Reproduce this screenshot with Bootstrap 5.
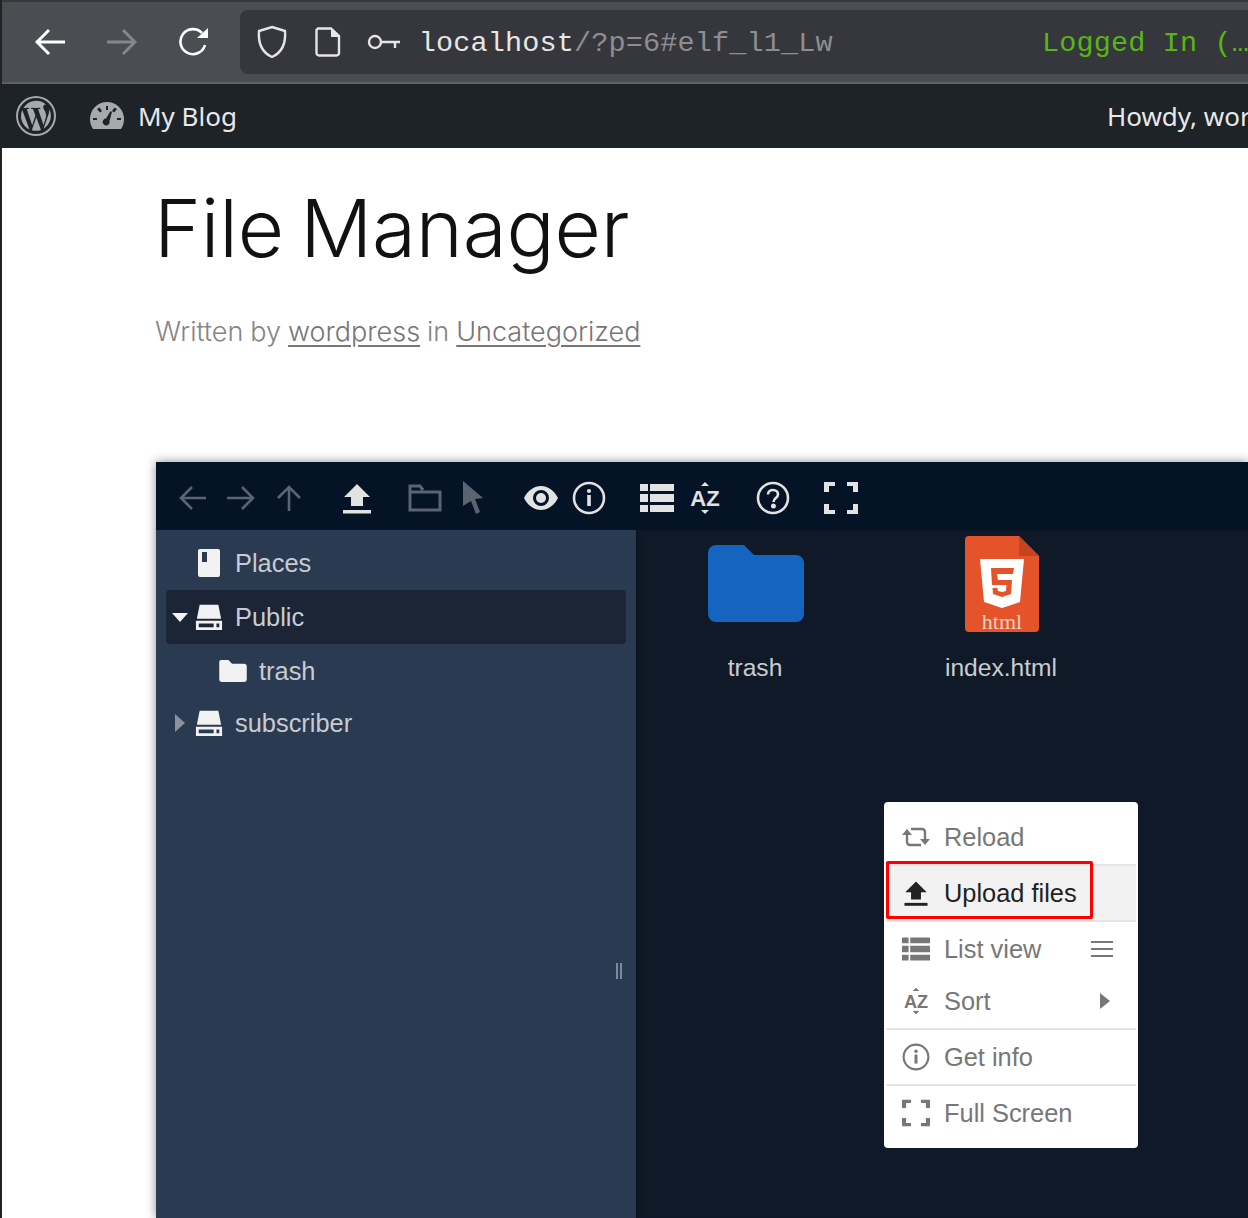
<!DOCTYPE html>
<html lang="en">
<head>
  <meta charset="UTF-8" />
  <title>File Manager</title>
  <link href="https://cdn.jsdelivr.net/npm/bootstrap@5.3.0/dist/css/bootstrap.min.css" rel="stylesheet">
  <style>
    html, body { height: 1218px; overflow: hidden; }
    body { background: #fff; border-left: 2px solid #222; width: 1248px; }

    /* browser chrome */
    .chrome-bar { height: 84px; margin-left: -2px; background: #4a4d52; border-top: 2px solid #36383c; border-bottom: 2px solid #5d6064; }
    .chrome-nav { width: 240px; padding-left: 14px; }
    .chrome-btn { width: 72px; }
    .url-box { height: 64px; margin-top: 8px; background: #36373c; border-radius: 8px 0 0 8px; font-family: "Liberation Mono", monospace; font-size: 28.5px; letter-spacing: .15px; white-space: nowrap; overflow: hidden; }
    .url-host { color: #e6e6e6; padding-top: 5px; }
    .url-rest { color: #8d8e92; padding-top: 5px; }
    .url-icons { width: 179px; padding-left: 4px; flex-shrink: 0; }
    .url-slot { width: 56px; }
    .url-status { color: #56b614; margin-left: 209px; padding-top: 5px; }

    /* wp admin bar */
    .wp-bar { height: 64px; margin-left: -2px; padding: 0 0 0 16px; background: #1d2327; color: #e8e9ea; font-family: "Noto Sans", sans-serif; font-size: 26px; white-space: nowrap; overflow: hidden; flex-wrap: nowrap; justify-content: flex-start; }
    .wp-blog { margin-left: 34px; gap: 14px; flex-shrink: 0; }
    .wp-user { margin-left: 870px; flex-shrink: 0; }

    /* post header */
    .post-head { padding-left: 152px; height: 314px; }
    .post-title { margin: 0; padding-top: 34px; font-family: Inter, sans-serif; font-weight: 300; font-size: 80px; line-height: 92px; letter-spacing: -0.2px; word-spacing: -6px; color: #111; }
    .post-meta { margin: 40px 0 0 1px; font-family: Inter, sans-serif; font-weight: 300; font-size: 27px; line-height: 36px; letter-spacing: 0; word-spacing: -.6px; color: #858585; }
    .post-meta a { color: #767676; text-underline-offset: 4px; }

    /* file manager */
    .fm-box { margin-left: 154px; height: 756px; box-shadow: 0 0 10px rgba(0,0,0,.45); font-family: "Liberation Sans", sans-serif; font-size: 25.4px; }
    .fm-tools { height: 68px; padding: 4px 0 0 13px; gap: 20px; background: #051326; color: #e2e2e2; }
    .fm-tool { width: 48px; height: 64px; }
    .fm-tool.off { color: #5b6472; }
    .fm-body { height: 688px; }
    .fm-side { width: 480px; background: #2a3a50; color: #c8ccd2; padding: 6px 10px 0; }
    .fm-row { height: 54px; border-radius: 4px; }
    .fm-row.active { background: #1c2535; }
    .fm-row.last { height: 50px; }
    .fm-arrow { width: 27px; }
    .fm-ico { width: 32px; margin-right: 10px; color: #f2f2f2; }
    .fm-sub { padding-left: 53px; }
    .fm-sub .fm-ico { width: 28px; margin-right: 12px; }
    .fm-grip { left: 460px; top: 433px; width: 6px; height: 16px; border-left: 2px solid #7f8a99; border-right: 2px solid #7f8a99; }
    .fm-main { background: #101927; color: #c8ccd2; padding: 6px 0 0; gap: 8px; box-shadow: inset 5px 0 5px -4px #0a101a; }
    .fm-cell { width: 238px; }
    .fm-thumb { height: 96px; padding-left: 2px; }
    .fm-thumb svg { overflow: visible; }
    .fm-name { margin-top: 21px; line-height: 30px; font-size: 24.6px; }

    /* context menu */
    .ctx-menu { left: 728px; top: 340px; width: 254px; padding: 8px 2px; margin: 0; border: 0; border-radius: 4px; font-size: 25.4px; }
    .ctx-item { height: 54px; padding: 0 0 0 16px; color: #777; }
    .ctx-item.short { height: 52px; padding-bottom: 2px; }
    .ctx-item.hot { background: #f2f2f2; color: #222; }
    .ctx-item .ctx-ico { width: 28px; margin-right: 14px; }
    .ctx-sep { margin: 0; border-top: 2px solid #e5e5e5; opacity: 1; }
    .ctx-mark { left: 2px; top: 59px; width: 207px; height: 58px; border: 3px solid #f00; border-radius: 2px; }
    .ctx-right { margin-left: auto; margin-right: 23px; }
    .ctx-caret { margin-left: auto; margin-right: 26px; }
    svg { display: block; }
  </style>
</head>
<body>
  <!-- shared icons -->
  <svg width="0" height="0" class="position-absolute">
    <symbol id="i-upload" viewBox="0 0 34 34"><path fill="currentColor" d="M17 3 30 16H23V25H11V16H4Z"/><rect x="3" y="29" width="28" height="3.5" fill="currentColor"/></symbol>
    <symbol id="i-info" viewBox="0 0 34 34"><circle cx="17" cy="17" r="15" fill="none" stroke="currentColor" stroke-width="2.6"/><rect x="15.2" y="14" width="3.6" height="11" fill="currentColor"/><circle cx="17" cy="10" r="2.1" fill="currentColor"/></symbol>
    <symbol id="i-list" viewBox="0 0 34 34"><path fill="currentColor" d="M0 3H8V10H0ZM10 3H34V10H10ZM0 13H8V21H0ZM10 13H34V21H10ZM0 24H8V31H0ZM10 24H34V31H10Z"/></symbol>
    <symbol id="i-full" viewBox="0 0 34 34"><path fill="currentColor" d="M0 1H11V5H5V11H0ZM23 1H34V11H29V5H23ZM0 23H5V29H11V33H0ZM29 23H34V33H23V29H29Z"/></symbol>
    <symbol id="i-drive" viewBox="0 0 30 30"><path fill="currentColor" d="M5 2H25L28 17H2Z"/><path fill="currentColor" d="M1 19H29V29H1ZM4 22V26H20V22ZM23 22V26H26V22Z" fill-rule="evenodd"/></symbol>
    <symbol id="i-folder" viewBox="0 0 30 24"><path fill="currentColor" d="M2 0H10L14 4H27A3 3 0 0 1 30 7V21A3 3 0 0 1 27 24H3A3 3 0 0 1 0 21V2A2 2 0 0 1 2 0Z"/></symbol>
  </svg>

  <header class="chrome-bar d-flex">
    <div class="chrome-nav d-flex align-items-center">
      <div class="chrome-btn d-flex justify-content-center"><svg width="30" height="28" viewBox="0 0 30 28" fill="none" stroke="#fff" stroke-width="3"><path d="M1 14H30M14 2 2 14 14 26"/></svg></div>
      <div class="chrome-btn d-flex justify-content-center"><svg width="30" height="28" viewBox="0 0 30 28" fill="none" stroke="#85878a" stroke-width="3"><path d="M0 14H28M16 2 28 14 16 26"/></svg></div>
      <div class="chrome-btn d-flex justify-content-center"><svg width="30" height="30" viewBox="0 0 30 30" fill="none" stroke="#fff" stroke-width="2.6"><path d="M26 18A12.5 12.5 0 1 1 23 6"/><path d="M18 11H29V1Z" fill="#fff" stroke="none"/></svg></div>
    </div>
    <div class="url-box flex-grow-1 d-flex align-items-center">
      <div class="url-icons d-flex align-items-center">
        <div class="url-slot d-flex justify-content-center"><svg width="32" height="34" viewBox="0 0 32 34" fill="none" stroke="#e6e6e6" stroke-width="2.4"><path d="M16 2 29 6C30 18 27 27 16 32 5 27 2 18 3 6Z"/></svg></div>
        <div class="url-slot d-flex justify-content-center"><svg width="26" height="30" viewBox="0 0 26 30" fill="none" stroke="#e6e6e6" stroke-width="2.4"><path d="M3 1.500H16L24 9V26A2.500 2.500 0 0 1 21.500 28.500H4A2.500 2.500 0 0 1 1.500 26V3Z"/><path d="M16 1 25 10H16Z" fill="#e6e6e6" stroke="none"/></svg></div>
        <div class="url-slot d-flex justify-content-center"><svg width="34" height="18" viewBox="0 0 34 18" fill="none" stroke="#e6e6e6" stroke-width="2.4"><circle cx="8" cy="9" r="6"/><path d="M14 9H33M28 9V15"/></svg></div>
      </div>
      <span class="url-host">localhost</span><span class="url-rest">/?p=6#elf_l1_Lw</span>
      <span class="url-status">Logged In (…</span>
    </div>
  </header>

  <nav class="navbar wp-bar">
    <svg class="flex-shrink-0" width="40" height="40" viewBox="0 0 40 40" fill="#a7aaad"><path fill-rule="evenodd" d="M20 0a20 20 0 1 0 0 40 20 20 0 0 0 0-40Zm0 2a18 18 0 1 1 0 36 18 18 0 0 1 0-36Z"/><path d="M5 20c0 6 3.500 11 8.500 13.500L6.300 14A15 15 0 0 0 5 20Zm25-1c0-2-.7-3.300-1.300-4.300-.8-1.300-1.500-2.400-1.500-3.600 0-1.400 1-2.700 2.600-2.700h.2A15 15 0 0 0 7.400 12h1c1.600 0 4-.2 4-.2.800 0 .9 1.200.1 1.300 0 0-.8.100-1.700.1l5.400 16 3.200-9.700-2.300-6.300c-.8 0-1.500-.1-1.500-.1-.8-.1-.7-1.300.1-1.300 0 0 2.500.2 4 .2 1.600 0 4-.2 4-.2.800 0 .9 1.200.1 1.300 0 0-.8.100-1.700.1l5.400 15.900 1.500-4.900c.6-2 1-3.400 1-4.200ZM20.300 21.200l-4.500 13a15 15 0 0 0 9.200-.2l-.1-.2ZM33.100 12.700c.1.500.1 1 .1 1.500 0 1.500-.3 3.200-1.100 5.300l-4.600 13.200a15 15 0 0 0 5.600-20Z"/></svg>
    <div class="wp-blog d-flex align-items-center">
      <svg width="34" height="28" viewBox="0 0 34 28" fill="#a7aaad"><path fill-rule="evenodd" d="M17 0A17 17 0 0 0 0 17C0 21 1 24 3 27H31C33 24 34 21 34 17A17 17 0 0 0 17 0ZM16 4H18V8H16ZM7 7 9.500 5.500 12 9 10 10.500ZM24.500 5.500 27 7 24 10.500 22 9ZM3 16H7V18H3ZM27 16H31V18H27ZM20.500 9 22 10 19.500 19A3.500 3.500 0 1 1 16 16.500Z"/></svg>
      <span>My Blog</span>
    </div>
    <span class="wp-user">Howdy, wordpress</span>
  </nav>

  <section class="post-head">
    <h1 class="post-title">File Manager</h1>
    <p class="post-meta">Written by <a href="#">wordpress</a> in <a href="#">Uncategorized</a></p>
  </section>

  <section class="fm-box position-relative">
    <div class="fm-tools d-flex">
      <div class="d-flex">
        <div class="fm-tool off d-flex align-items-center justify-content-center"><svg width="28" height="26" viewBox="0 0 28 26" fill="none" stroke="currentColor" stroke-width="2.6"><path d="M2 13H27M13 2 2 13 13 24"/></svg></div>
        <div class="fm-tool off d-flex align-items-center justify-content-center"><svg width="28" height="26" viewBox="0 0 28 26" fill="none" stroke="currentColor" stroke-width="2.6"><path d="M0 13H25M15 2 26 13 15 24"/></svg></div>
        <div class="fm-tool off d-flex align-items-center justify-content-center"><svg width="26" height="26" viewBox="0 0 26 26" fill="none" stroke="currentColor" stroke-width="2.6"><path d="M13 26V2M2 13 13 2 24 13"/></svg></div>
      </div>
      <div class="d-flex">
        <div class="fm-tool d-flex align-items-center justify-content-center"><svg width="34" height="34"><use href="#i-upload"/></svg></div>
      </div>
      <div class="d-flex">
        <div class="fm-tool off d-flex align-items-center justify-content-center"><svg width="34" height="28" viewBox="0 0 34 28" fill="none" stroke="currentColor" stroke-width="3"><path d="M2 8H32V26H2ZM2 8V2H12L15 6"/></svg></div>
        <div class="fm-tool off d-flex align-items-center justify-content-center"><svg width="24" height="34" viewBox="0 0 24 34" fill="currentColor"><path d="M2 0 22 17 14 18 19 31 15 33 10 20 2 25Z"/></svg></div>
      </div>
      <div class="d-flex">
        <div class="fm-tool d-flex align-items-center justify-content-center"><svg width="34" height="24" viewBox="0 0 34 24"><path fill="currentColor" fill-rule="evenodd" d="M17 0C25 0 31 6 34 12 31 18 25 24 17 24 9 24 3 18 0 12 3 6 9 0 17 0ZM17 4A8 8 0 1 0 17 20 8 8 0 0 0 17 4Z"/><circle cx="17" cy="12" r="5" fill="currentColor"/></svg></div>
        <div class="fm-tool d-flex align-items-center justify-content-center"><svg width="34" height="34"><use href="#i-info"/></svg></div>
      </div>
      <div class="d-flex">
        <div class="fm-tool d-flex align-items-center justify-content-center"><svg width="34" height="34"><use href="#i-list"/></svg></div>
        <div class="fm-tool d-flex align-items-center justify-content-center"><svg width="34" height="34" viewBox="0 0 34 34"><path fill="currentColor" d="M17 1 21 5H13ZM17 33 21 29H13Z"/><text x="17" y="25" text-anchor="middle" font-family="Liberation Sans" font-weight="700" font-size="22" fill="currentColor">AZ</text></svg></div>
      </div>
      <div class="d-flex">
        <div class="fm-tool d-flex align-items-center justify-content-center"><svg width="34" height="34" viewBox="0 0 34 34" fill="none" stroke="currentColor" stroke-width="2.6"><circle cx="17" cy="17" r="15"/><path d="M12 13.500C12 10.500 14.500 9 17 9 20 9 22 11 22 13.500 22 17 17.500 17 17.500 21"/><circle cx="17.500" cy="25" r="1.200" fill="currentColor"/></svg></div>
      </div>
      <div class="d-flex">
        <div class="fm-tool d-flex align-items-center justify-content-center"><svg width="34" height="34"><use href="#i-full"/></svg></div>
      </div>
    </div>

    <div class="fm-body d-flex">
      <aside class="fm-side position-relative">
        <div class="fm-row d-flex align-items-center">
          <div class="fm-arrow"></div>
          <div class="fm-ico d-flex justify-content-center"><svg width="22" height="28" viewBox="0 0 22 28"><path fill="currentColor" fill-rule="evenodd" d="M2 0H20A2 2 0 0 1 22 2V26A2 2 0 0 1 20 28H2A2 2 0 0 1 0 26V2A2 2 0 0 1 2 0ZM4 3V13H9V3Z"/></svg></div>
          <span>Places</span>
        </div>
        <div class="fm-row active d-flex align-items-center">
          <div class="fm-arrow d-flex justify-content-center"><svg width="16" height="9" viewBox="0 0 18 10" preserveAspectRatio="none"><path fill="#f2f2f2" d="M0 0H18L9 10Z"/></svg></div>
          <div class="fm-ico d-flex justify-content-center"><svg width="28" height="28"><use href="#i-drive"/></svg></div>
          <span>Public</span>
        </div>
        <div class="fm-row fm-sub d-flex align-items-center">
          <div class="fm-ico d-flex justify-content-center"><svg width="28" height="22"><use href="#i-folder"/></svg></div>
          <span>trash</span>
        </div>
        <div class="fm-row last d-flex align-items-center">
          <div class="fm-arrow d-flex justify-content-center"><svg width="10" height="18" viewBox="0 0 10 18"><path fill="#8a929e" d="M0 0V18L10 9Z"/></svg></div>
          <div class="fm-ico d-flex justify-content-center"><svg width="28" height="28"><use href="#i-drive"/></svg></div>
          <span>subscriber</span>
        </div>
        <div class="fm-grip position-absolute"></div>
      </aside>

      <main class="fm-main flex-grow-1 d-flex align-items-start">
        <div class="fm-cell text-center">
          <div class="fm-thumb d-flex justify-content-center"><svg width="96" height="96" viewBox="0 0 96 96"><path fill="#1565c0" d="M8 9H36L46 19H88A8 8 0 0 1 96 27V78A8 8 0 0 1 88 86H8A8 8 0 0 1 0 78V17A8 8 0 0 1 8 9Z"/></svg></div>
          <div class="fm-name">trash</div>
        </div>
        <div class="fm-cell text-center">
          <div class="fm-thumb d-flex justify-content-center"><svg width="74" height="96" viewBox="0 0 74 96">
            <path fill="#e5532a" d="M4 0H54L74 20V92A4 4 0 0 1 70 96H4A4 4 0 0 1 0 92V4A4 4 0 0 1 4 0Z"/>
            <path fill="#c4441f" d="M54 0 74 20H54Z"/>
            <path fill="#fff" d="M15 23H59L55 66 37 72 19 66Z"/>
            <path fill="#e5532a" d="M26 32H49L48 38H32L33 44H47L46 58 37 61 28 58 27.500 52H32.500L33 55 37 56 41 55 41.500 49H27Z"/>
            <text x="37" y="93" text-anchor="middle" font-family="Liberation Serif" font-size="22" fill="#f6d2c6">html</text>
          </svg></div>
          <div class="fm-name">index.html</div>
        </div>
      </main>
    </div>

    <div class="dropdown-menu d-block ctx-menu position-absolute">
      <a class="dropdown-item ctx-item d-flex align-items-center" href="#">
        <div class="ctx-ico"><svg width="28" height="22" viewBox="0 0 28 22" fill="none" stroke="currentColor" stroke-width="2.4"><path d="M5 8V16A3 3 0 0 0 8 19H19M9 3H20A3 3 0 0 1 23 6V14"/><path d="M0 9 5 3 10 9ZM18 13 23 19 28 13Z" fill="currentColor" stroke="none"/></svg></div>Reload
      </a>
      <hr class="ctx-sep">
      <a class="dropdown-item ctx-item hot d-flex align-items-center" href="#">
        <div class="ctx-ico"><svg width="28" height="28"><use href="#i-upload"/></svg></div>Upload files
      </a>
      <hr class="ctx-sep">
      <a class="dropdown-item ctx-item d-flex align-items-center" href="#">
        <div class="ctx-ico"><svg width="28" height="28"><use href="#i-list"/></svg></div>List view
        <svg class="ctx-right" width="22" height="16" viewBox="0 0 24 16" preserveAspectRatio="none" fill="currentColor"><path d="M0 0H24V2H0ZM0 7H24V9H0ZM0 14H24V16H0Z"/></svg>
      </a>
      <a class="dropdown-item ctx-item short d-flex align-items-center" href="#">
        <div class="ctx-ico"><svg width="28" height="28" viewBox="0 0 34 34"><path fill="currentColor" d="M17 1 21 5H13ZM17 33 21 29H13Z"/><text x="17" y="25" text-anchor="middle" font-family="Liberation Sans" font-weight="700" font-size="22" fill="currentColor">AZ</text></svg></div>Sort
        <svg class="ctx-caret" width="10" height="16" viewBox="0 0 10 16"><path fill="currentColor" d="M0 0V16L10 8Z"/></svg>
      </a>
      <hr class="ctx-sep">
      <a class="dropdown-item ctx-item d-flex align-items-center" href="#">
        <div class="ctx-ico"><svg width="28" height="28"><use href="#i-info"/></svg></div>Get info
      </a>
      <hr class="ctx-sep">
      <a class="dropdown-item ctx-item d-flex align-items-center" href="#">
        <div class="ctx-ico"><svg width="28" height="28"><use href="#i-full"/></svg></div>Full Screen
      </a>
      <div class="ctx-mark position-absolute"></div>
    </div>
  </section>
</body>
</html>
